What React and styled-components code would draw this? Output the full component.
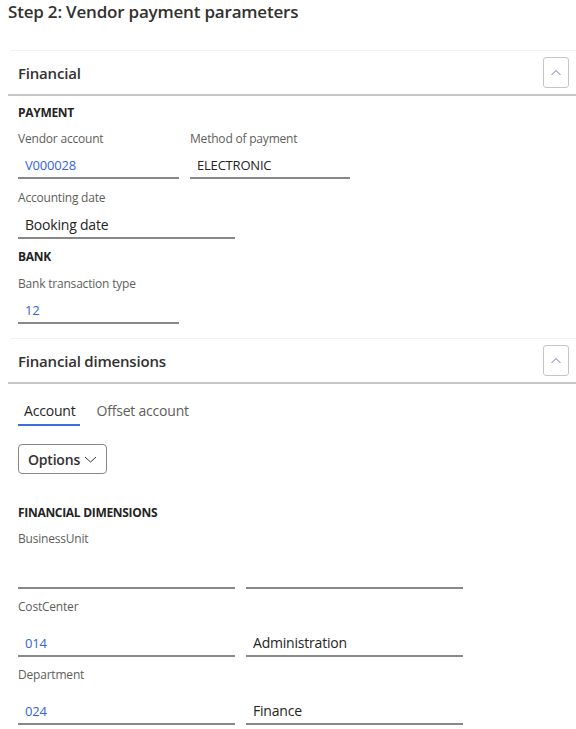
import React from "react";
import styled, { createGlobalStyle } from "styled-components";

const Global = createGlobalStyle`
  html, body { margin: 0; padding: 0; background: #fff; }
  body { font-family: "Open Sans", "Noto Sans", sans-serif; color: #323130; }
  * { box-sizing: border-box; }
`;

const Page = styled.div`
  width: 576px;
  padding-left: 8px;
`;

const Title = styled.h1`
  margin: 0;
  padding-top: 1px;
  height: 50px;
  font-size: 17px;
  line-height: 22px;
  font-weight: 600;
  color: #323130;
  letter-spacing: -0.2px;
`;

const Section = styled.section`
  border-top: 1px solid #f3f2f1;
  margin-left: 2px;
`;

const SectionHeader = styled.div`
  display: flex;
  align-items: center;
  justify-content: space-between;
  height: 45px;
  margin-left: -2px;
  padding: 0 7px 0 10px;
  border-bottom: 2px solid #c8c6c4;
`;

const SectionTitle = styled.h2`
  margin: 0;
  font-size: 15px;
  font-weight: 600;
  color: #323130;
  letter-spacing: -0.2px;
`;

const CollapseButton = styled.button`
  width: 26px;
  height: 31px;
  padding: 0;
  border: 1px solid #c8c6c4;
  border-radius: 3px;
  background: #fff;
  display: flex;
  align-items: center;
  justify-content: center;
`;

const SectionBody = styled.div`
  padding: 0 0 ${(p) => p.$pb || 16}px 8px;
`;

const GroupHeading = styled.div`
  margin-top: ${(p) => p.$mt ?? 10}px;
  font-size: 12px;
  line-height: 16px;
  font-weight: 700;
  color: #252423;
  text-transform: uppercase;
  letter-spacing: -0.3px;
`;

const Row = styled.div`
  display: flex;
  gap: 11px;
`;

const Field = styled.div`
  width: ${(p) => p.$w}px;
  display: flex;
  flex-direction: column;
`;

const Label = styled.label`
  margin-top: ${(p) => p.$mt ?? 11}px;
  font-size: 12px;
  line-height: 16px;
  color: #605e5c;
  letter-spacing: -0.2px;
  min-height: 16px;
`;

const Input = styled.div`
  margin-top: ${(p) => p.$mt ?? 5}px;
  height: ${(p) => p.$h ?? 27}px;
  padding: 0 6px 0 7px;
  display: flex;
  align-items: center;
  border-bottom: 2px solid #8a8886;
  font-size: ${(p) => (p.$small ? 13 : 14)}px;
  color: ${(p) => (p.$link ? "#3464e0" : "#252423")};
  letter-spacing: -0.2px;
`;

const Tabs = styled.div`
  display: flex;
  gap: 10px;
  margin-top: 12px;
`;

const Tab = styled.div`
  padding: 0 5px 0 6px;
  height: 30px;
  display: flex;
  align-items: center;
  font-size: 14px;
  color: ${(p) => (p.$active ? "#252423" : "#605e5c")};
  border-bottom: 2px solid ${(p) => (p.$active ? "#3b6fe0" : "transparent")};
  letter-spacing: -0.2px;
`;

const OptionsButton = styled.button`
  margin-top: 18px;
  width: 89px;
  height: 30px;
  border: 1px solid #8a8886;
  border-radius: 4px;
  background: #fff;
  display: flex;
  align-items: center;
  justify-content: center;
  gap: 4px;
  font-family: inherit;
  font-size: 14px;
  font-weight: 600;
  color: #323130;
  letter-spacing: -0.2px;
  padding: 0;
`;

const ChevronUp = () => (
  <svg width="12" height="12" viewBox="0 0 12 12">
    <path d="M1.5 8 L6 3.5 L10.5 8" fill="none" stroke="#6b7a99" strokeWidth="1" />
  </svg>
);

const ChevronDown = () => (
  <svg width="13" height="12" viewBox="0 0 13 12">
    <path d="M1 4 L6.5 9 L12 4" fill="none" stroke="#323130" strokeWidth="1" />
  </svg>
);

export default function App() {
  return (
    <>
      <Global />
      <Page>
        <Title>Step 2: Vendor payment parameters</Title>

        <Section>
          <SectionHeader>
            <SectionTitle>Financial</SectionTitle>
            <CollapseButton aria-label="Collapse"><ChevronUp /></CollapseButton>
          </SectionHeader>
          <SectionBody $pb={14}>
            <GroupHeading $mt={9}>Payment</GroupHeading>
            <Row>
              <Field $w={161}>
                <Label $mt={10}>Vendor account</Label>
                <Input $link $small>V000028</Input>
              </Field>
              <Field $w={160}>
                <Label $mt={10}>Method of payment</Label>
                <Input $small>ELECTRONIC</Input>
              </Field>
            </Row>
            <Row>
              <Field $w={217}>
                <Label>Accounting date</Label>
                <Input $h={28}>Booking date</Input>
              </Field>
            </Row>
            <GroupHeading>Bank</GroupHeading>
            <Row>
              <Field $w={161}>
                <Label $mt={11}>Bank transaction type</Label>
                <Input $link $small>12</Input>
              </Field>
            </Row>
          </SectionBody>
        </Section>

        <Section>
          <SectionHeader>
            <SectionTitle>Financial dimensions</SectionTitle>
            <CollapseButton aria-label="Collapse"><ChevronUp /></CollapseButton>
          </SectionHeader>
          <SectionBody>
            <Tabs>
              <Tab $active>Account</Tab>
              <Tab>Offset account</Tab>
            </Tabs>
            <OptionsButton>
              Options <ChevronDown />
            </OptionsButton>
            <GroupHeading $mt={31}>Financial dimensions</GroupHeading>
            <Row>
              <Field $w={217}>
                <Label $mt={10}>BusinessUnit</Label>
                <Input $mt={15} />
              </Field>
              <Field $w={217}>
                <Label $mt={10} />
                <Input $mt={15} />
              </Field>
            </Row>
            <Row>
              <Field $w={217}>
                <Label $mt={10}>CostCenter</Label>
                <Input $mt={15} $link $small>014</Input>
              </Field>
              <Field $w={217}>
                <Label $mt={10} />
                <Input $mt={15}>Administration</Input>
              </Field>
            </Row>
            <Row>
              <Field $w={217}>
                <Label $mt={10}>Department</Label>
                <Input $mt={15} $link $small>024</Input>
              </Field>
              <Field $w={217}>
                <Label $mt={10} />
                <Input $mt={15}>Finance</Input>
              </Field>
            </Row>
          </SectionBody>
        </Section>
      </Page>
    </>
  );
}
